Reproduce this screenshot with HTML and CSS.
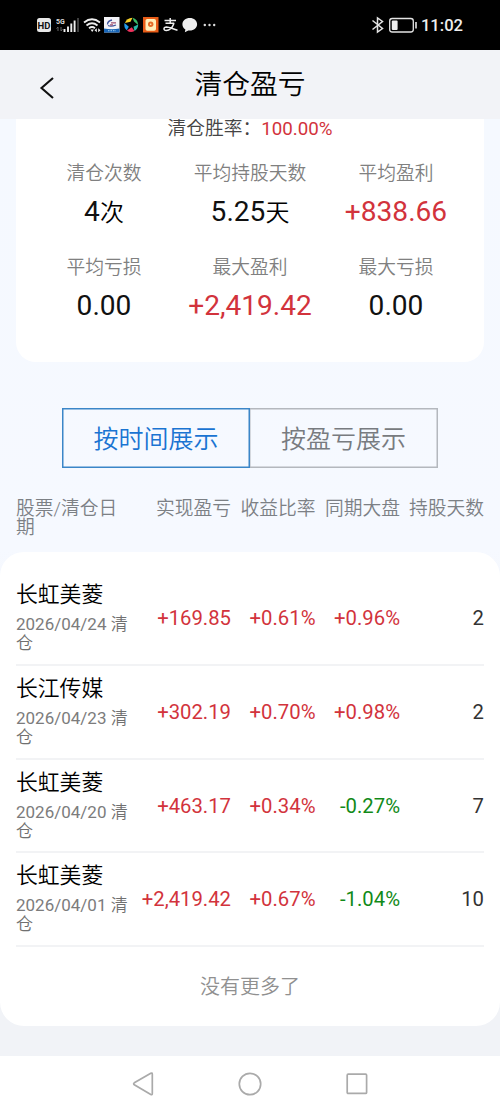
FILE: index.html
```html
<!DOCTYPE html>
<html lang="zh-CN">
<head>
<meta charset="utf-8">
<meta name="viewport" content="width=device-width, initial-scale=1">
<title>清仓盈亏</title>
<link rel="stylesheet" href="styles.css">
</head>
<body>
<div class="status">
  <svg class="status-icons" width="190" height="30" viewBox="30 10 190 30">
    <rect x="37" y="18" width="14" height="14" rx="2.5" fill="#e8e8e8"/>
    <text x="44" y="28.6" class="hd">HD</text>
    <text x="56" y="24" class="fiveg">5G</text>
    <path d="M58 27v4M56.5 28.5L58 27M61 27v4M62.500 29.500L61 31" stroke="#666" stroke-width="1" fill="none"/>
    <path d="M64.500 29v3M68 26.500v5.500M71.300 23.500v8.500M74.600 20.500v11.500" stroke="#eee" stroke-width="1.900"/>
    <path d="M78 18v14" stroke="#555" stroke-width="1.500"/>
    <g fill="none" stroke="#eee" stroke-width="1.800">
      <path d="M84 22.500q8-6.500 16 0M86.500 25.500q5.500-4.500 11 0M89 28.300q3-2.500 6 0"/>
    </g>
    <path d="M90.500 29.500h3.400l-1.700 2.500zM96.800 28.300l-2.300 2 2.300 2zM98.200 28.300l2.300 2-2.300 2z" fill="#eee"/>
    <rect x="104" y="17" width="15.500" height="15.500" fill="#f4f4f8"/>
    <path d="M104 28.500q8 1.500 15.500 0v4H104z" fill="#1765b8"/>
    <path d="M107.500 24.500q0-3.500 4.500-4.500M108 25.500q3 1.500 8-.5" stroke="#3f559f" stroke-width="1.300" fill="none"/>
    <path d="M111 22.800h5M110 24.800h3" stroke="#a0506f" stroke-width="1.300"/>
    <path d="M108 30.700h8" stroke="#9dcbe9" stroke-width="1" stroke-dasharray="1.500 1"/>
    <path d="M125 23q1.500-4.800 7.500-5.200l-2 4z" fill="#f6cf28"/>
    <path d="M132.500 17.800q5.300 1.200 5.700 7.200l-4.200-3.500z" fill="#38bb67"/>
    <path d="M138.200 24.500q0 4-3.700 6.500l-1-4.200z" fill="#28b8a5"/>
    <path d="M134.500 31q-4 2.300-7.500-.5l4.800-3.300z" fill="#ef315b"/>
    <path d="M126.800 30.300q-3.300-2.600-2.300-7.300l4.300 3.800z" fill="#239be8"/>
    <rect x="143" y="17" width="15.500" height="15.500" fill="#e85c17"/>
    <rect x="145.500" y="19" width="10.500" height="11.700" rx="1.800" fill="#fff0ba"/>
    <circle cx="150.700" cy="24.200" r="2.700" fill="#e46b27"/>
    <circle cx="150.700" cy="24.200" r=".8" fill="#fff0ba"/>
    <g fill="none" stroke="#eee" stroke-width="1.500">
      <path d="M164.500 20.500h11.500M170.200 18v5M165.500 23.300h8.700"/>
      <path d="M174 23.300q-2.500 7-7.800 7.200c-3 0-3-3.300.3-3.500 3.500 0 6 2 11 3.300"/>
    </g>
    <path d="M189.800 18c4.200 0 7.300 2.700 7.300 6.300s-3.100 6.300-7.300 6.300l-1.500-.1-3.500 1.700.6-2.700c-2-1.200-3-3-3-5.200 0-3.600 3.200-6.300 7.400-6.300z" fill="#eee"/>
    <g fill="#ddd"><circle cx="204.800" cy="25" r="1.200"/><circle cx="209.500" cy="25" r="1.200"/><circle cx="214.200" cy="25" r="1.200"/></g>
  </svg>
  <div class="status-right">
    <svg width="46" height="18" viewBox="371 16 46 18" fill="none" stroke="#e4e4e4">
      <path d="M372.500 20.500l10 8-5 3.500V18l5 3.500-10 8" stroke-width="1.500"/>
      <rect x="389.700" y="18.500" width="23.600" height="13.500" rx="2.500" stroke-width="1.300"/>
      <rect x="391.800" y="20.500" width="5.800" height="9.500" rx="1" fill="#eee" stroke="none"/>
      <path d="M416 22v6.500" stroke-width="1.600"/>
    </svg>
    <span class="clock">11:02</span>
  </div>
</div>
<header class="header">
  <svg class="back" width="16" height="24" viewBox="0 0 16 24"><path d="M14 2L2.500 12 14 22"/></svg>
  <h1>清仓盈亏</h1>
</header>
<main class="content">
  <section class="summary">
    <p class="rate">清仓胜率：<span class="up">100.00%</span></p>
    <div class="stats">
      <div class="stat"><span class="label">清仓次数</span><span class="value">4<small>次</small></span></div>
      <div class="stat"><span class="label">平均持股天数</span><span class="value">5.25<small>天</small></span></div>
      <div class="stat"><span class="label">平均盈利</span><span class="value up">+838.66</span></div>
      <div class="stat"><span class="label">平均亏损</span><span class="value">0.00</span></div>
      <div class="stat"><span class="label">最大盈利</span><span class="value up">+2,419.42</span></div>
      <div class="stat"><span class="label">最大亏损</span><span class="value">0.00</span></div>
    </div>
  </section>
  <div class="tabs"><button class="tab active">按时间展示</button><button class="tab">按盈亏展示</button></div>
  <div class="columns thead"><span>股票/清仓日期</span><span>实现盈亏</span><span>收益比率</span><span>同期大盘</span><span>持股天数</span></div>
  <section class="list">
    <div class="columns row"><div class="stock"><b>长虹美菱</b><span>2026/04/24 <i>清仓</i></span></div><span class="up">+169.85</span><span class="up">+0.61%</span><span class="up">+0.96%</span><span>2</span></div>
    <div class="columns row"><div class="stock"><b>长江传媒</b><span>2026/04/23 <i>清仓</i></span></div><span class="up">+302.19</span><span class="up">+0.70%</span><span class="up">+0.98%</span><span>2</span></div>
    <div class="columns row"><div class="stock"><b>长虹美菱</b><span>2026/04/20 <i>清仓</i></span></div><span class="up">+463.17</span><span class="up">+0.34%</span><span class="down">-0.27%</span><span>7</span></div>
    <div class="columns row"><div class="stock"><b>长虹美菱</b><span>2026/04/01 <i>清仓</i></span></div><span class="up">+2,419.42</span><span class="up">+0.67%</span><span class="down">-1.04%</span><span>10</span></div>
    <p class="end">没有更多了</p>
  </section>
</main>
<nav class="nav">
  <svg width="22" height="26" viewBox="0 0 22 26"><path d="M2.300 11.800Q1 12.800 2.300 13.800L18.800 23.500Q20.300 24.300 20.300 22.500V3.200Q20.300 1.400 18.800 2.300Z"/></svg>
  <svg width="26" height="26" viewBox="0 0 26 26"><circle cx="13" cy="13" r="10.700"/></svg>
  <svg width="22" height="26" viewBox="0 0 22 26"><rect x="1.200" y="3.200" width="19.400" height="19.200" rx="1"/></svg>
</nav>
</body>
</html>
```
FILE: styles.css
```css
* { box-sizing: border-box; }
body {
  margin: 0;
  width: 500px;
  height: 1111px;
  display: flex;
  flex-direction: column;
  overflow: hidden;
  background: #fff;
  color: #111;
  font-family: Roboto, "Noto Sans CJK SC", sans-serif;
}
p, h1 { margin: 0; font-weight: 400; }
.status {
  flex: none;
  height: 50px;
  padding: 0 37px 0 30px;
  display: flex;
  align-items: center;
  justify-content: space-between;
  background: #000;
}
.status-right { display: flex; align-items: center; gap: 4px; }
.status-right svg { flex: none; }
.clock { font-size: 16.6px; line-height: 20px; font-weight: 500; color: #eee; padding-top: 1px; }
.hd { font: 700 9.5px Roboto, sans-serif; text-anchor: middle; fill: #111; }
.fiveg { font: 700 7px Roboto, sans-serif; fill: #ddd; }
.header {
  flex: none;
  height: 69px;
  padding: 0 39px;
  display: grid;
  grid-template-columns: 16px 1fr 16px;
  background: #f2f3f7;
}
.header h1 { font-size: 27.8px; line-height: 70px; text-align: center; font-weight: 350; color: #000; }
.back { margin-top: 26px; fill: none; stroke: #111; stroke-width: 2.1; }
.content {
  flex: none;
  height: 937px;
  overflow: hidden;
  background: linear-gradient(#f5f9ff 0, #f6f9ff 430px, #f1f3f7 600px);
}
.summary {
  height: 243px;
  margin: 0 16px;
  background: #fff;
  border-radius: 0 0 20px 20px;
}
.rate { font-size: 18.75px; line-height: 20px; text-align: center; color: #444; font-weight: 350; }
.rate .up { font-weight: 400; }
.up { color: #d2333c; }
.down { color: #118a18; }
.stats {
  padding: 21px 15px 0;
  display: grid;
  grid-template-columns: repeat(3, 146px);
  grid-auto-rows: 94px;
}
.stat { display: flex; flex-direction: column; align-items: center; }
.label { font-size: 18.75px; line-height: 28px; color: #808080; font-weight: 350; }
.value { font-size: 28.1px; line-height: 34px; margin-top: 7px; height: 34px; }
.value small { font-size: 24px; line-height: 1; font-weight: 350; color: #000; }
.tabs { display: flex; justify-content: center; margin-top: 46px; }
.tab {
  width: 188px;
  height: 60px;
  padding: 3px 0 0;
  font: 350 25px/55px Roboto, "Noto Sans CJK SC", sans-serif;
  color: #787b80;
  background: transparent;
  border: 1px solid #b4b8be;
  border-left: 0;
  box-shadow: inset 0 0 0 .5px #b4b8be;
}
.tab.active { color: #1a74d2; border: 1px solid #3b86c8; box-shadow: inset 0 0 0 .5px #3b86c8; }
.columns {
  display: grid;
  grid-template-columns: 115px 100px 84.500px 84.500px 84px;
  margin: 0 16px;
}
.columns > span { text-align: right; white-space: nowrap; }
.thead { margin-top: 32px; font-size: 18.75px; line-height: 18.75px; color: #7c8085; font-weight: 350; }
.thead > span:first-child { text-align: left; white-space: normal; }
.list { height: 474px; margin-top: 14px; padding-top: 20.5px; background: #fff; border-radius: 24px; }
.row {
  height: 93.800px;
  border-bottom: 2px solid #f2f3f5;
  font-size: 20.300px;
  color: #333;
}
.row > span { line-height: 92px; }
.row > .up { color: #d2333c; }
.row > .down { color: #118a18; }
.stock { padding-top: 8px; }
.stock b { display: block; font-weight: 350; font-size: 21.800px; line-height: 30px; color: #000; }
.stock span { display: block; margin-top: 5px; font-size: 17px; line-height: 19px; color: #7c7c7c; }
.stock i { font-style: normal; font-weight: 350; color: #707070; }
.end { font-size: 20px; line-height: 80px; text-align: center; color: #909090; font-weight: 350; }
.nav {
  flex: 1;
  display: flex;
  justify-content: center;
  align-items: center;
  gap: 83px;
  fill: none;
}
.nav svg { stroke: #aaa; stroke-width: 1.7; }
```
